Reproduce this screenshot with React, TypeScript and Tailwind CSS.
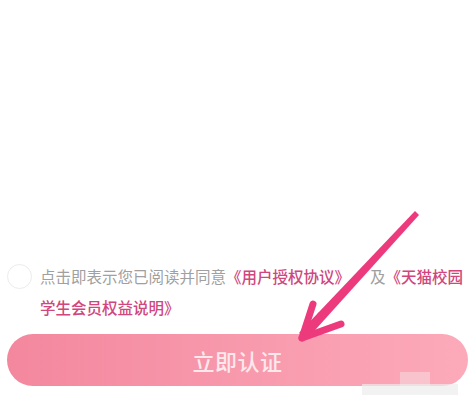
import React from "react";

const cjk = { fontFamily: '"Noto Sans CJK SC", "Noto Sans", sans-serif' };

function Arrow() {
  return (
    <svg
      className="pointer-events-none absolute left-0 top-0"
      width="469"
      height="400"
      viewBox="0 0 469 400"
    >
      {/* shaft, thinner at the tail */}
      <polygon points="415,211 419,215 307,339 299,333" fill="#ec3a7d" />
      {/* barbs */}
      <path
        d="M302 338 L313 304"
        stroke="#ec3a7d"
        strokeWidth="7"
        strokeLinecap="round"
        fill="none"
      />
      <path
        d="M302 338 L341 324"
        stroke="#ec3a7d"
        strokeWidth="7"
        strokeLinecap="round"
        fill="none"
      />
      <path
        d="M306 334 L320 314"
        stroke="#ec3a7d"
        strokeWidth="4"
        strokeLinecap="round"
        fill="none"
      />
    </svg>
  );
}

export default function App() {
  return (
    <div className="relative h-[400px] w-[469px] overflow-hidden bg-white" style={cjk}>
      <div className="flex h-full flex-col justify-end pb-[14px]">
        <div className="flex items-start gap-[8px] pl-[7px] pr-[2px]">
          <span className="mt-[3px] h-[25px] w-[25px] shrink-0 rounded-full border border-[#ececec] bg-white" />
          <p className="text-[15.5px] leading-[31px] text-[#a0a0a0]">
            点击即表示您已阅读并同意
            <span className="font-medium text-[#d0467d]">《用户授权协议》</span>
            <span className="ml-[20px]">及</span>
            <span className="font-medium text-[#d0467d]">《天猫校园学生会员权益说明》</span>
          </p>
        </div>
        <button
          type="button"
          className="mx-[7px] mt-[11px] h-[52px] w-[461px] rounded-full bg-gradient-to-r from-[#f3879e] to-[#fcaaba] text-[22px] font-medium tracking-[0.5px] text-[#fde8ec]"
        >
          立即认证
        </button>
      </div>
      <div className="absolute left-[400px] top-[372px] h-[14px] w-[30px] bg-[#f8d7dd]/60" />
      <div className="absolute left-[362px] top-[384px] h-[11px] w-[96px] bg-[#ececec]/70" />
      <Arrow />
    </div>
  );
}
